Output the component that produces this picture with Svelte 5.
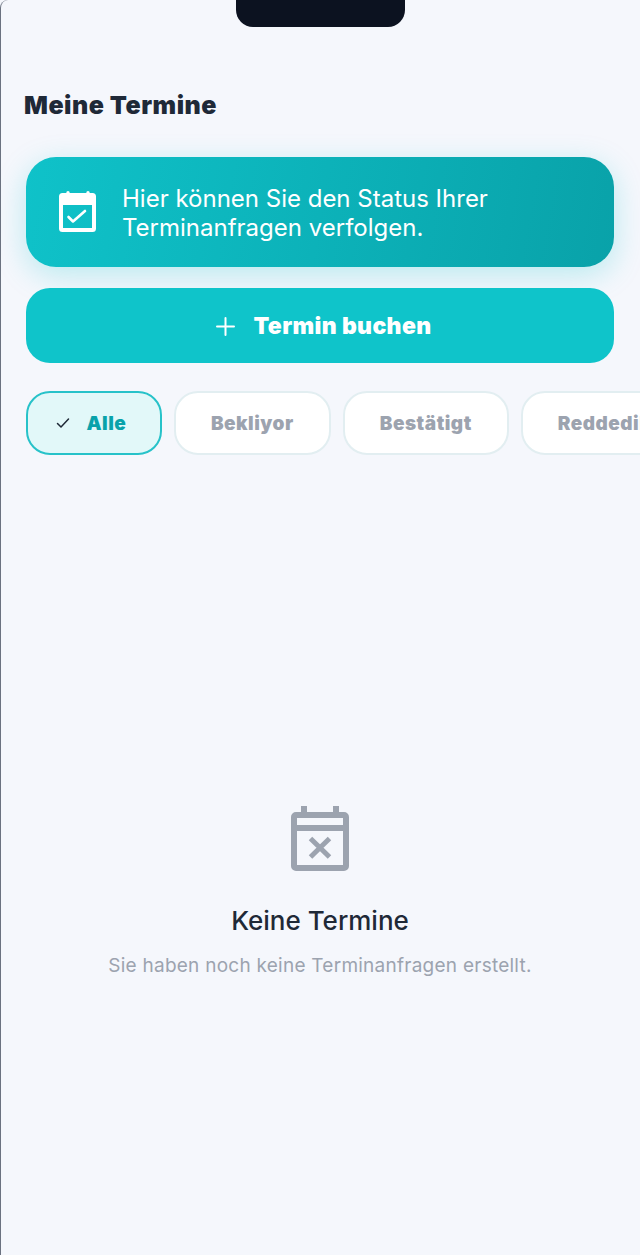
<script lang="ts">
	const filters = [
		{ label: 'Alle', active: true },
		{ label: 'Bekliyor', active: false },
		{ label: 'Bestätigt', active: false },
		{ label: 'Reddedildi', active: false }
	];
</script>

<div class="screen">
	<div class="notch"></div>

	<h1 class="title">Meine Termine</h1>

	<section class="content">
		<div class="info-card">
			<svg class="info-icon" viewBox="0 0 37 41" aria-hidden="true">
				<path
					fill="#fff"
					fill-rule="evenodd"
					d="M9 0a1.700 1.700 0 0 1 1.700 1.700V2h16.600v-.3a1.700 1.700 0 0 1 3.400 0V2h2.800A3.500 3.500 0 0 1 37 5.500v32a3.500 3.500 0 0 1-3.500 3.500h-30A3.500 3.500 0 0 1 0 37.500v-32A3.500 3.500 0 0 1 3.500 2h3.800v-.3A1.700 1.700 0 0 1 9 0ZM4 14v23h29V14H4Z"
				/>
				<path d="M9.500 26 14 30.500 26 20" fill="none" stroke="#fff" stroke-width="2.600" stroke-linecap="round" stroke-linejoin="round" />
			</svg>
			<p>Hier können Sie den Status Ihrer Terminanfragen verfolgen.</p>
		</div>

		<button class="book-btn" type="button">
			<svg viewBox="0 0 19 19" aria-hidden="true">
				<path d="M9.500 1v17M1 9.500h17" fill="none" stroke="#fff" stroke-width="2" stroke-linecap="round" />
			</svg>
			<span>Termin buchen</span>
		</button>
	</section>

	<div class="filters">
		{#each filters as filter}
			<button class="chip" class:chip--active={filter.active} type="button">
				{#if filter.active}
					<svg viewBox="0 0 14 14" aria-hidden="true">
						<path d="M1.500 7.500 5 11 12.500 3" fill="none" stroke="#1f2937" stroke-width="1.500" stroke-linecap="round" stroke-linejoin="round" />
					</svg>
				{/if}
				<span>{filter.label}</span>
			</button>
		{/each}
	</div>

	<div class="empty">
		<svg class="empty-icon" viewBox="0 0 58 65" aria-hidden="true">
			<path
				fill="#9ca3af"
				fill-rule="evenodd"
				d="M10 0h6v6h26V0h6v6h5a5 5 0 0 1 5 5v49a5 5 0 0 1-5 5H5a5 5 0 0 1-5-5V11a5 5 0 0 1 5-5h5V0ZM6 12v7h46v-7H6Zm0 13v34h46V25H6Z"
			/>
			<path d="M19.500 32.500 38.500 51M38.500 32.500 19.500 51" fill="none" stroke="#9ca3af" stroke-width="5" />
		</svg>
		<h2>Keine Termine</h2>
		<p>Sie haben noch keine Terminanfragen erstellt.</p>
	</div>
</div>

<style>
	:global(body) {
		margin: 0;
		background: #f5f7fc;
	}

	.screen {
		position: relative;
		box-sizing: border-box;
		width: 640px;
		height: 1255px;
		overflow: hidden;
		padding-top: 90px;
		border-left: 1px solid #6b7280;
		border-top-left-radius: 8px;
		background: #f5f7fc;
		font-family: Inter, 'Noto Sans', sans-serif;
	}

	.notch {
		position: absolute;
		top: -1px;
		left: 235px;
		width: 169px;
		height: 28px;
		border-radius: 0 0 17px 17px;
		background: #0c1220;
	}

	.title {
		margin: 0 0 0 23px;
		color: #1f2937;
		font-size: 25px;
		font-weight: 900;
		letter-spacing: 0.5px;
		line-height: 30px;
	}

	.content {
		display: flex;
		flex-direction: column;
		gap: 21px;
		margin: 37px 26px 0 25px;
	}

	.info-card {
		display: flex;
		align-items: center;
		gap: 26px;
		height: 110px;
		box-sizing: border-box;
		padding: 0 33px;
		border-radius: 30px;
		background: linear-gradient(100deg, #0fc2c9 0%, #09a2a9 100%);
		box-shadow: 0 8px 30px rgba(15, 196, 203, 0.26);
	}

	.info-icon {
		flex: none;
		width: 37px;
		height: 41px;
		margin-top: -2px;
	}

	.info-card p {
		margin: 1px 0 0;
		color: #fff;
		font-size: 24px;
		font-weight: 400;
		line-height: 29px;
	}

	.book-btn {
		display: flex;
		align-items: center;
		justify-content: center;
		gap: 19px;
		height: 75px;
		padding: 1px 0 0 7px;
		border: 0;
		border-radius: 24px;
		background: #0fc4ca;
		color: #fff;
		font-family: inherit;
		font-size: 23px;
		font-weight: 900;
		letter-spacing: 0.35px;
	}

	.book-btn svg {
		width: 19px;
		height: 19px;
	}

	.filters {
		display: flex;
		gap: 12px;
		margin: 28px 0 0 25px;
	}

	.chip {
		display: flex;
		flex: none;
		align-items: center;
		justify-content: center;
		gap: 17px;
		height: 64px;
		box-sizing: border-box;
		padding: 0 35px;
		border: 2px solid #e2eef1;
		border-radius: 24px;
		background: #fff;
		color: #9ca3af;
		font-family: inherit;
		font-size: 19px;
		font-weight: 900;
		letter-spacing: 0.5px;
	}

	.chip svg {
		width: 14px;
		height: 14px;
	}

	.chip--active {
		padding: 0 33.500px 0 27.500px;
		border-color: #27c2c9;
		background: #e2f8f9;
		color: #09a2aa;
	}

	.empty {
		display: flex;
		flex-direction: column;
		align-items: center;
		margin-top: 351px;
		padding-right: 1px;
	}

	.empty-icon {
		width: 58px;
		height: 65px;
	}

	.empty h2 {
		margin: 33px 0 0;
		color: #1f2937;
		font-size: 26px;
		font-weight: 500;
		line-height: 34px;
	}

	.empty p {
		margin: 16px 0 0;
		color: #9ca3af;
		font-size: 19px;
		font-weight: 400;
		letter-spacing: 0.25px;
		line-height: 24px;
	}
</style>
